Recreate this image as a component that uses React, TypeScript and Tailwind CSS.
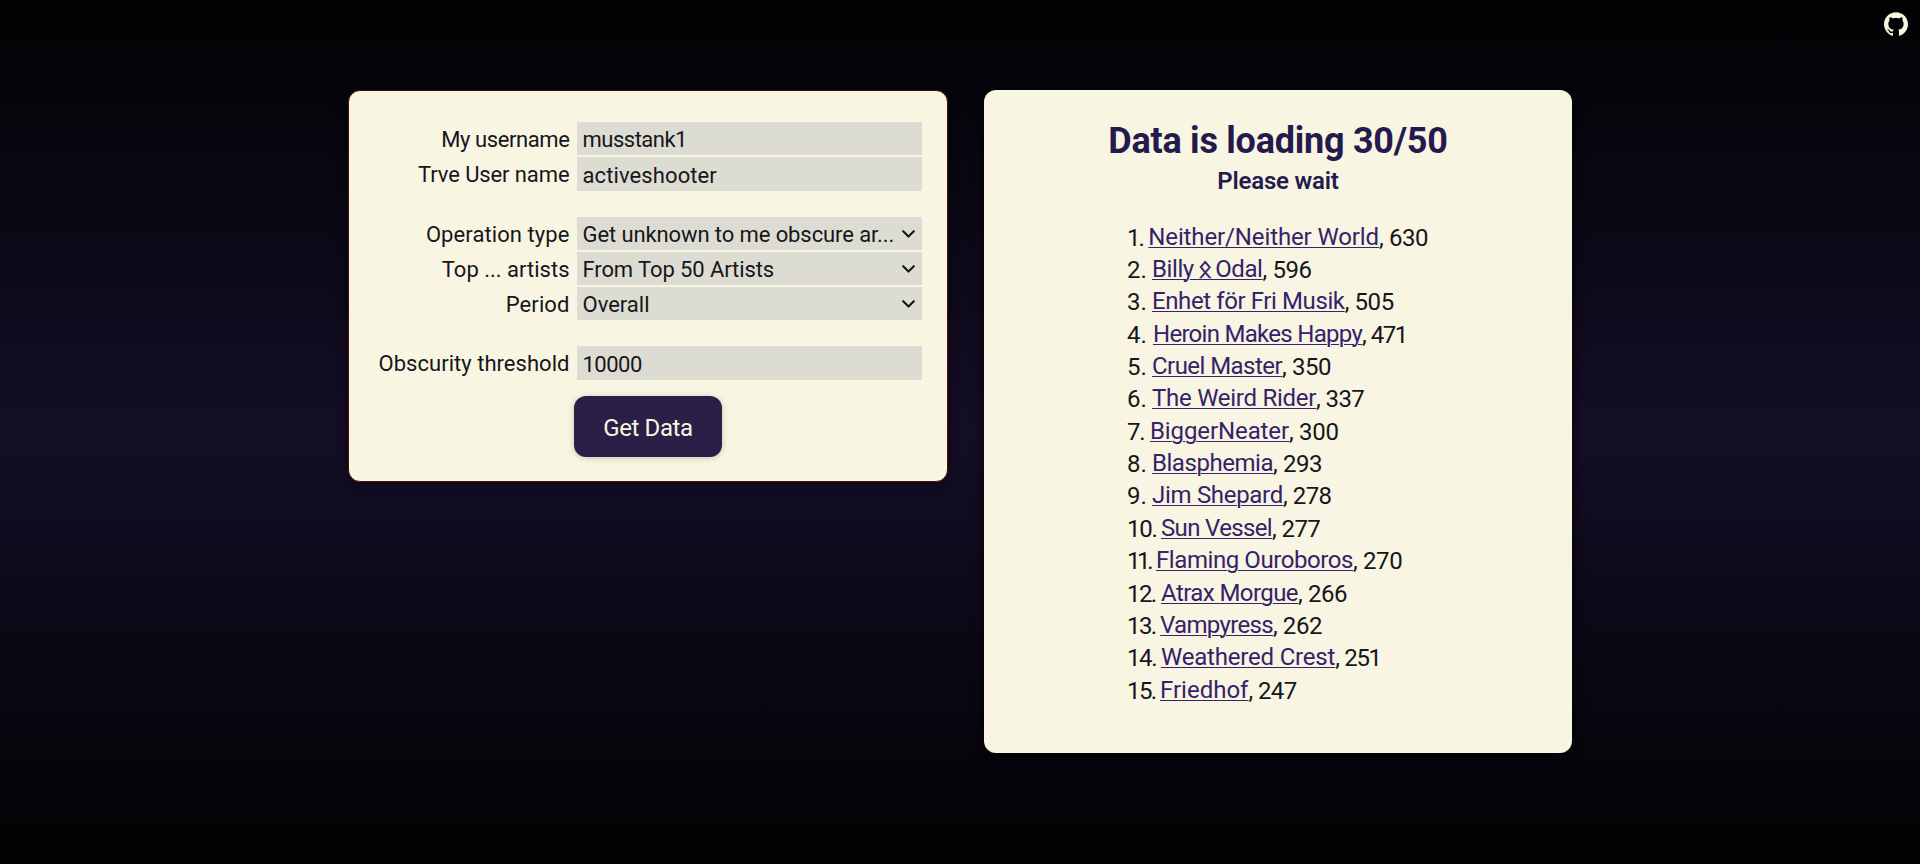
import type { ReactNode } from "react";
import { SiGithub } from "react-icons/si";

type Artist = { name: ReactNode; track: string; n: string; nClass: string; plays: string; pClass: string };

const artists: Artist[] = [
  { name: "Neither/Neither World", track: "tracking-[-0.12px]", n: "1.", nClass: "w-[21.3px] tracking-[-2px]", plays: "630", pClass: "tracking-[-0.4px]" },
  { name: <>Billy<span className="mx-[-1.7px] [-webkit-text-stroke:0.8px]"> ᛟ </span>Odal</>, track: "tracking-[-0.4px]", n: "2.", nClass: "w-[25px]", plays: "596", pClass: "tracking-[-0.4px]" },
  { name: "Enhet för Fri Musik", track: "tracking-[-0.4px]", n: "3.", nClass: "w-[25px]", plays: "505", pClass: "tracking-[-0.4px]" },
  { name: "Heroin Makes Happy", track: "tracking-[-0.71px]", n: "4.", nClass: "w-[26px]", plays: "471", pClass: "tracking-[-1.5px] [word-spacing:1px]" },
  { name: "Cruel Master", track: "tracking-[-0.55px]", n: "5.", nClass: "w-[25px]", plays: "350", pClass: "tracking-[-0.4px]" },
  { name: "The Weird Rider", track: "tracking-[-0.27px]", n: "6.", nClass: "w-[25px]", plays: "337", pClass: "tracking-[-0.6px]" },
  { name: "BiggerNeater", track: "tracking-[-0.1px]", n: "7.", nClass: "w-[23px] tracking-[-1.2px]", plays: "300", pClass: "tracking-[-0.3px]" },
  { name: "Blasphemia", track: "tracking-[-0.46px]", n: "8.", nClass: "w-[25px]", plays: "293", pClass: "tracking-[-0.4px]" },
  { name: "Jim Shepard", track: "tracking-[-0.3px]", n: "9.", nClass: "w-[25px]", plays: "278", pClass: "tracking-[-0.5px]" },
  { name: "Sun Vessel", track: "tracking-[-0.65px]", n: "10.", nClass: "w-[34px] tracking-[-1.3px]", plays: "277", pClass: "tracking-[-0.6px]" },
  { name: "Flaming Ouroboros", track: "tracking-[-0.42px]", n: "11.", nClass: "w-[29px] tracking-[-3.4px]", plays: "270", pClass: "tracking-[-0.4px]" },
  { name: "Atrax Morgue", track: "tracking-[-0.57px]", n: "12.", nClass: "w-[34px] tracking-[-1.6px]", plays: "266", pClass: "tracking-[-0.4px]" },
  { name: "Vampyress", track: "tracking-[-0.67px]", n: "13.", nClass: "w-[33px] tracking-[-1.6px]", plays: "262", pClass: "tracking-[-0.4px]" },
  { name: "Weathered Crest", track: "tracking-[-0.2px]", n: "14.", nClass: "w-[34px] tracking-[-1.4px]", plays: "251", pClass: "tracking-[-1.3px] [word-spacing:1px]" },
  { name: "Friedhof", track: "tracking-[0px]", n: "15.", nClass: "w-[33px] tracking-[-1.6px]", plays: "247", pClass: "tracking-[-0.6px]" },
];

function Field({ label, value, labelClass, valueClass, select, tall }: {
  label: string; value: string; labelClass: string; valueClass: string; select?: boolean; tall?: boolean;
}) {
  return (
    <div className={"flex text-[22px] leading-[35px] text-[#16161a] " + (tall ? "h-[34px]" : "h-[33px]")}>
      <span className={"w-[220.5px] shrink-0 whitespace-nowrap text-right " + labelClass}>{label}</span>
      <span className="ml-[7.5px] flex w-[345px] items-center justify-between bg-[#dddcd3] pl-[5.5px] pr-[7px]">
        <span className={"whitespace-nowrap pt-[2px] leading-[33px] " + valueClass}>{value}</span>
        {select && (
          <svg width="13" height="8" viewBox="0 0 13 8" fill="none" stroke="currentColor" strokeWidth="2.1" strokeLinecap="round" strokeLinejoin="round">
            <path d="M1.2 1.2 6.5 6.6 11.8 1.2" />
          </svg>
        )}
      </span>
    </div>
  );
}

export default function App() {
  return (
    <div className="relative flex h-[864px] w-full items-start bg-[linear-gradient(to_bottom,#020203_0%,#140e27_50%,#020203_100%)] pl-[348px] pt-[90px] font-[Roboto,sans-serif]">
      <a className="absolute right-3 top-3 text-[#f8f5e2]" aria-label="GitHub">
        <SiGithub size={24} />
      </a>

      <section className="h-[392px] w-[600px] rounded-xl border border-[#56060c] bg-[#f8f5e2] pt-[31px] shadow-[0_0_12px_rgba(0,0,0,0.6)]">
        <div className="flex flex-col gap-[26px]">
          <div className="flex flex-col gap-[2px]">
            <Field label="My username" value="musstank1" labelClass="tracking-[-0.4px]" valueClass="tracking-[-0.5px]" />
            <Field label="Trve User name" value="activeshooter" labelClass="tracking-[-0.1px]" valueClass="tracking-[0.1px]" tall />
          </div>
          <div className="flex flex-col gap-[2px]">
            <Field label="Operation type" value="Get unknown to me obscure ar..." labelClass="tracking-[0.08px]" valueClass="tracking-[-0.1px]" select />
            <Field label="Top ... artists" value="From Top 50 Artists" labelClass="tracking-[0px]" valueClass="tracking-[-0.1px]" select />
            <Field label="Period" value="Overall" labelClass="tracking-[0.1px]" valueClass="tracking-[0px]" select />
          </div>
          <Field label="Obscurity threshold" value="10000" labelClass="tracking-[0.03px]" valueClass="tracking-[-0.5px]" tall />
        </div>
        <button className="ml-[225px] mt-4 h-[61px] w-[148px] rounded-xl bg-[#2a1f46] pt-[3px] text-[24px] tracking-[-0.4px] text-[#f8f5e2] shadow-[0_1px_6px_rgba(0,0,0,0.2)]">
          Get Data
        </button>
      </section>

      <section className="ml-9 h-[663px] w-[588px] rounded-xl bg-[#f8f5e2] pt-[29px] shadow-[0_0_12px_rgba(0,0,0,0.8)]">
        <h1 className="text-center text-[36px] font-bold leading-[44px] tracking-[-0.25px] text-[#251a4e]">Data is loading 30/50</h1>
        <h2 className="mt-[3px] text-center text-[24px] font-semibold leading-[30px] tracking-[-0.2px] text-[#251a4e]">Please wait</h2>
        <ol className="ml-[143px] mt-[25.6px] text-[24px] text-[#16161a]">
          {artists.map((a) => (
            <li key={a.n} className="flex h-[32.36px] whitespace-pre leading-[32px]">
              <span className={"shrink-0 " + a.nClass}>{a.n}</span>
              <a className={"relative -top-px text-[#35226a] underline decoration-1 underline-offset-2 " + a.track}>{a.name}</a>
              <span className={a.pClass}>, {a.plays}</span>
            </li>
          ))}
        </ol>
      </section>
    </div>
  );
}
